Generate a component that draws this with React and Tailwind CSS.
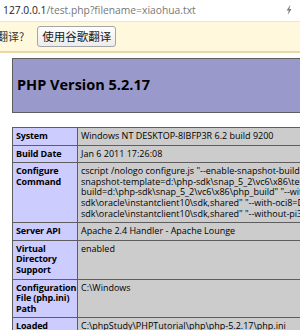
import React from "react";

const configureLines = [
  String.raw`cscript /nologo configure.js "--enable-snapshot-build" "--enable-debug-pack" "--with-`,
  String.raw`snapshot-template=d:\php-sdk\snap_5_2\vc6\x86\template" "--with-php-`,
  String.raw`build=d:\php-sdk\snap_5_2\vc6\x86\php_build" "--with-pdo-oci=D:\php-`,
  String.raw`sdk\oracle\instantclient10\sdk,shared" "--with-oci8=D:\php-`,
  String.raw`sdk\oracle\instantclient10\sdk,shared" "--without-pi3web"`,
];

const rows = [
  { label: ["System"], value: ["Windows NT DESKTOP-8IBFP3R 6.2 build 9200"] },
  { label: ["Build Date"], value: ["Jan 6 2011 17:26:08"] },
  { label: ["Configure", "Command"], value: configureLines },
  { label: ["Server API"], value: ["Apache 2.4 Handler - Apache Lounge"] },
  { label: ["Virtual", "Directory", "Support"], value: ["enabled"] },
  { label: ["Configuration", "File (php.ini)", "Path"], value: [String.raw`C:\Windows`] },
  { label: ["Loaded", "Configuration", "File"], value: [String.raw`C:\phpStudy\PHPTutorial\php\php-5.2.17\php.ini`] },
];

function Lines({ items }) {
  return items.map((t, i) => (
    <div key={i} className="whitespace-nowrap">
      {t}
    </div>
  ));
}

export default function App() {
  return (
    <div className="w-[300px] h-[330px] overflow-hidden bg-white text-black font-['Open_Sans','Noto_Sans_CJK_SC',sans-serif]">
      {/* address bar */}
      <div className="h-[21px] flex items-center justify-between pl-[3px] pr-[8px] text-[10.3px]">
        <div className="whitespace-nowrap">
          <span className="text-[#222]">127.0.0.1</span>
          <span className="text-[#777]">/test.php?filename=xiaohua.txt</span>
        </div>
        <svg width="6" height="10" viewBox="0 0 6 10" className="mt-[-2px]">
          <path d="M4.2 0 L0.6 5.6 H2.8 L1.7 10 L5.5 4 H3.3 L4.4 0 Z" fill="#7d7d7d" />
        </svg>
      </div>

      {/* translate bar */}
      <div className="h-[32px] bg-[#fff8dc] border-t border-[#efe6c4] border-b-2 border-b-[#e6d9a4] flex items-center font-['Noto_Sans_CJK_SC',sans-serif] text-[11px] text-[#333]">
        <span className="ml-[-3px] whitespace-nowrap">翻译?</span>
        <button className="ml-[13px] h-[21px] px-[4px] border border-[#a5a5a5] rounded-[3px] bg-linear-to-b from-[#fefefe] to-[#ececec] text-[11.5px] text-[#1a1a1a] leading-none">
          使用谷歌翻译
        </button>
      </div>

      {/* php info header */}
      <div className="mt-[5px] ml-[12px] w-[620px] h-[55px] bg-[#9999cc] border border-[#5e5e5e] flex items-center pl-[4px] pb-[2px]">
        <h1 className="text-[14.5px] font-bold whitespace-nowrap">PHP Version 5.2.17</h1>
      </div>

      <table className="mt-[14px] ml-[12px] w-[620px] table-fixed border-collapse text-[9px] leading-[10.6px]">
        <colgroup>
          <col className="w-[65px]" />
          <col />
        </colgroup>
        <tbody>
          {rows.map((r, i) => (
            <tr key={i}>
              <td className="bg-[#ccccff] font-bold tracking-[-0.15px] border border-[#5e5e5e] p-[3px] align-top">
                <Lines items={r.label} />
              </td>
              <td className="bg-[#cccccc] border border-[#5e5e5e] p-[3px] align-top">
                <Lines items={r.value} />
              </td>
            </tr>
          ))}
        </tbody>
      </table>
    </div>
  );
}
